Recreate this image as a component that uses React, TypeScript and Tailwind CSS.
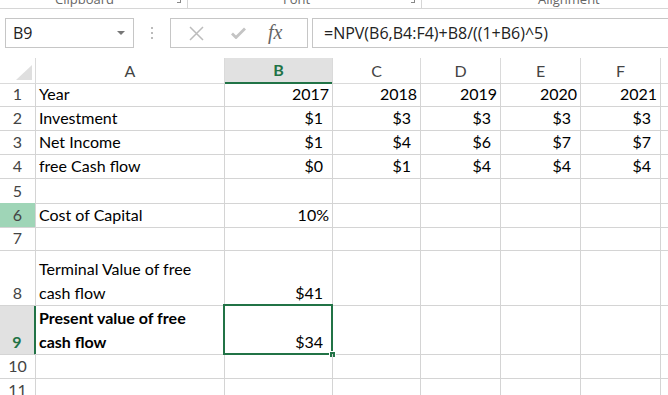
import React from "react";

const cols = "grid grid-cols-[36px_189px_108px_88px_80px_80px_80px_1fr]";

type Row = {
  n: string;
  h: string;
  a?: React.ReactNode;
  b?: string;
  rest?: string[];
  bold?: boolean;
  hdr?: "green" | "sel";
  cur?: boolean;
};

const rows: Row[] = [
  { n: "1", h: "h-[24px]", a: "Year", b: "2017", rest: ["2018", "2019", "2020", "2021"] },
  { n: "2", h: "h-[24px]", a: "Investment", b: "$1 ", rest: ["$3 ", "$3 ", "$3 ", "$3 "] },
  { n: "3", h: "h-[24px]", a: "Net Income", b: "$1 ", rest: ["$4 ", "$6 ", "$7 ", "$7 "] },
  { n: "4", h: "h-[25px]", a: "free Cash flow", b: "$0 ", rest: ["$1 ", "$4 ", "$4 ", "$4 "] },
  { n: "5", h: "h-[24px]" },
  { n: "6", h: "h-[23px]", a: "Cost of Capital", b: "10%", hdr: "green" },
  { n: "7", h: "h-[24px]" },
  {
    n: "8",
    h: "h-[56px]",
    a: (
      <>
        Terminal Value of free
        <br />
        cash flow
      </>
    ),
    b: "$41 ",
  },
  {
    n: "9",
    h: "h-[48px]",
    a: (
      <>
        Present value of free
        <br />
        cash flow
      </>
    ),
    b: "$34 ",
    bold: true,
    hdr: "sel",
    cur: true,
  },
  { n: "10", h: "h-[24px]" },
  { n: "11", h: "h-[24px]" },
];

const line = "border-r border-b border-[#d4d4d4]";

function Num({ v }: { v?: string }) {
  if (!v) return null;
  const money = v.endsWith(" ");
  return <span className={money ? "pr-[6px]" : ""}>{v.trim()}</span>;
}

export default function App() {
  return (
    <div className="w-[668px] h-[395px] overflow-hidden bg-white font-['Lato',sans-serif] text-[16px] text-black">
      {/* ribbon group captions, cut off */}
      <div className="relative h-[9px] overflow-hidden border-b border-[#d6d6d6] font-['Open_Sans',sans-serif] text-[13px] text-[#666] leading-none">
        <span className="absolute left-[55px] -top-[7px]">Clipboard</span>
        <span className="absolute left-[177px] top-0 w-[4px] h-[3px] border-r border-b border-[#888]" />
        <span className="absolute left-[187px] top-0 h-[8px] w-px bg-[#d6d6d6]" />
        <span className="absolute left-[283px] -top-[7px]">Font</span>
        <span className="absolute left-[411px] top-0 w-[4px] h-[3px] border-r border-b border-[#888]" />
        <span className="absolute left-[421px] top-0 h-[8px] w-px bg-[#d6d6d6]" />
        <span className="absolute left-[538px] -top-[7px]">Alignment</span>
      </div>

      {/* formula bar */}
      <div className="flex items-stretch h-[30px] mt-[9px] font-['Open_Sans',sans-serif]">
        <div className="ml-[5px] w-[129px] flex items-center justify-between border border-[#c6c6c6] pl-[7px] pr-[8px] text-[16px] text-[#222]">
          <span>B9</span>
          <svg width="8" height="5" viewBox="0 0 8 5">
            <path d="M0 0h8L4 4z" fill="#777" />
          </svg>
        </div>
        <div className="w-[36px] flex flex-col items-center justify-center gap-[3px]">
          <span className="w-[2px] h-[2px] bg-[#bbb]" />
          <span className="w-[2px] h-[2px] bg-[#bbb]" />
          <span className="w-[2px] h-[2px] bg-[#bbb]" />
        </div>
        <div className="w-[138px] flex items-center border border-[#c6c6c6]">
          <svg className="ml-[18px]" width="15" height="15" viewBox="0 0 15 15">
            <path d="M1 1l13 13M14 1L1 14" stroke="#bcbcbc" strokeWidth="1.5" />
          </svg>
          <svg className="ml-[27px]" width="15" height="12" viewBox="0 0 15 12">
            <path d="M1 6.5l4 4L14 1.5" stroke="#c4c4c4" strokeWidth="2.8" fill="none" />
          </svg>
          <span className="ml-[22px] font-['Liberation_Serif',serif] italic text-[20px] text-[#666] leading-none pb-[2px]">
            fx
          </span>
        </div>
        <div className="flex-1 ml-[4px] flex items-center border-y border-l border-[#c6c6c6] pl-[11px] text-[16px] text-[#222] whitespace-nowrap">
          =NPV(B6,B4:F4)+B8/((1+B6)^5)
        </div>
      </div>

      {/* grid */}
      <div className="mt-[10px]">
        <div className={`${cols} h-[24px] text-[#444]`}>
          <div className={`${line} relative border-[#dadada]`}>
            <svg className="absolute right-[3px] bottom-[3px]" width="16" height="15" viewBox="0 0 16 15">
              <path d="M16 0V15H0z" fill="#dfdfdf" />
            </svg>
          </div>
          <div className={`${line} border-[#dadada] flex items-center justify-center`}>A</div>
          <div className="border-r border-[#dadada] border-b-2 border-b-[#217346] bg-[#e1e1e1] flex items-center justify-center font-bold text-[#217346]">
            B
          </div>
          {["C", "D", "E", "F"].map((c) => (
            <div key={c} className={`${line} border-[#dadada] flex items-center justify-center`}>
              {c}
            </div>
          ))}
          <div className="border-b border-[#dadada]" />
        </div>

        {rows.map((r) => (
          <div key={r.n} className={`${cols} ${r.h} leading-[24px]`}>
            <div
              className={
                r.hdr === "green"
                  ? `${line} bg-[#9fd5b7] text-[#444] flex items-end justify-center`
                  : r.hdr === "sel"
                  ? "border-b border-[#d4d4d4] border-r-2 border-r-[#217346] bg-[#e1e1e1] text-[#217346] font-bold flex items-end justify-center"
                  : `${line} text-[#444] flex items-end justify-center`
              }
            >
              {r.n}
            </div>
            <div className={`${line} flex items-end pl-[3px] whitespace-nowrap ${r.bold ? "font-bold" : ""}`}>
              {r.a}
            </div>
            <div className={`${line} relative flex items-end justify-end pr-[3px]`}>
              <Num v={r.b} />
              {r.cur && (
                <>
                  <span className="absolute -left-[2px] -top-[2px] -right-[1px] -bottom-[1px] border-2 border-[#217346]" />
                  <span className="absolute -right-[4px] -bottom-[4px] w-[7px] h-[7px] bg-[#217346] border border-white" />
                </>
              )}
            </div>
            {[0, 1, 2, 3].map((i) => (
              <div key={i} className={`${line} flex items-end justify-end pr-[3px]`}>
                <Num v={r.rest?.[i]} />
              </div>
            ))}
            <div className="border-b border-[#d4d4d4]" />
          </div>
        ))}
      </div>
    </div>
  );
}
